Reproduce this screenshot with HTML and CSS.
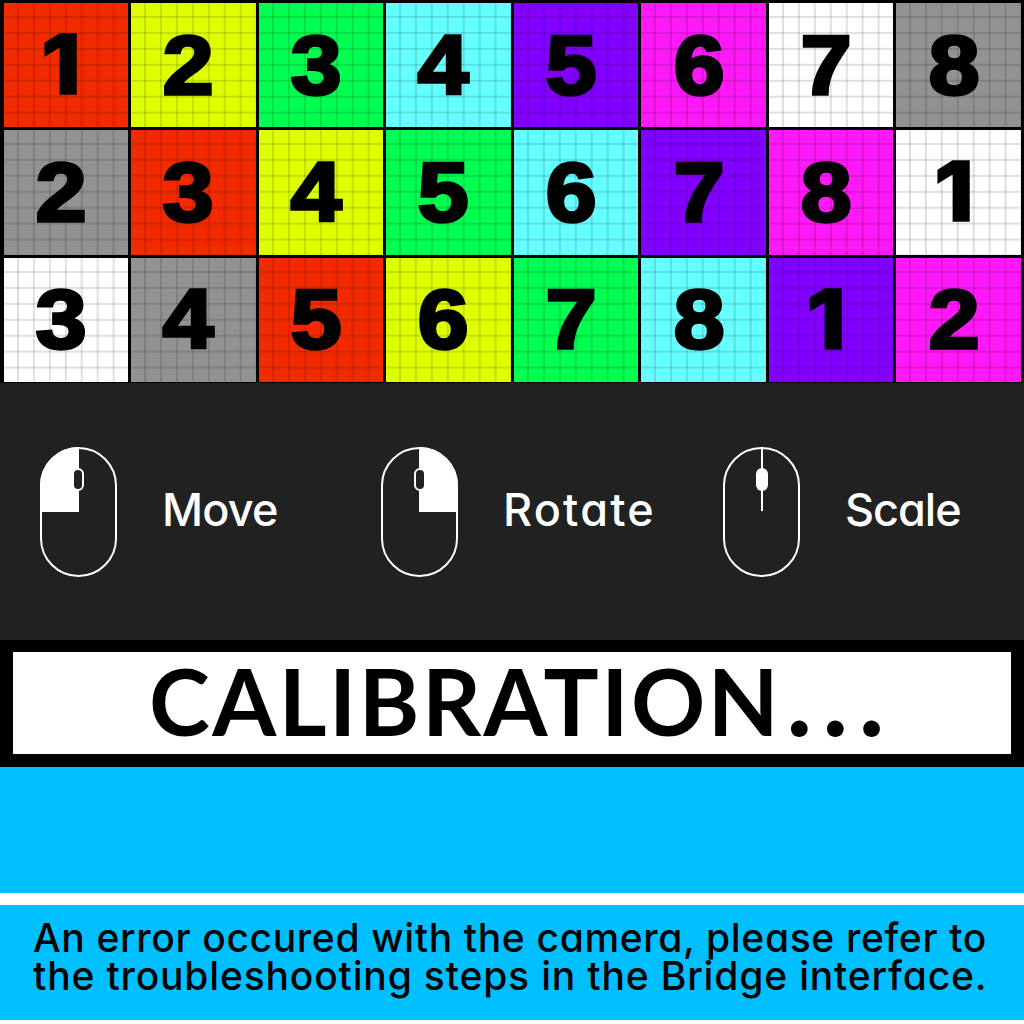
FILE: index.html
```
<!DOCTYPE html>
<html lang="en">
<head>
<meta charset="utf-8">
<title>Calibration</title>
<link rel="stylesheet" href="styles.css">
</head>
<body>
<main class="page">
  <section class="board">
    <div class="cell red"><span class="one">1</span></div><div class="cell yellow"><span>2</span></div><div class="cell green"><span>3</span></div><div class="cell cyan"><span>4</span></div><div class="cell purple"><span>5</span></div><div class="cell magenta"><span>6</span></div><div class="cell white"><span>7</span></div><div class="cell grey"><span>8</span></div>
    <div class="cell grey"><span>2</span></div><div class="cell red"><span>3</span></div><div class="cell yellow"><span>4</span></div><div class="cell green"><span>5</span></div><div class="cell cyan"><span>6</span></div><div class="cell purple"><span>7</span></div><div class="cell magenta"><span>8</span></div><div class="cell white"><span class="one">1</span></div>
    <div class="cell white"><span>3</span></div><div class="cell grey"><span>4</span></div><div class="cell red"><span>5</span></div><div class="cell yellow"><span>6</span></div><div class="cell green"><span>7</span></div><div class="cell cyan"><span>8</span></div><div class="cell purple"><span class="one">1</span></div><div class="cell magenta"><span>2</span></div>
  </section>

  <section class="controls">
    <div class="control">
      <svg class="mouse" viewBox="0 0 77 130">
        <path d="M39 0A38.5 38.5 0 0 0 0 38.5V65H39Z" fill="#fff"/>
        <rect x="1" y="1" width="75" height="128" rx="37.5" fill="none" stroke="#fff" stroke-width="2"/>
        <rect x="33" y="22" width="10" height="21" rx="5" fill="#212121" stroke="#fff" stroke-width="2"/>
      </svg>
      <span class="label move">Move</span>
    </div>
    <div class="control">
      <svg class="mouse" viewBox="0 0 77 130">
        <path d="M38 0A38.5 38.5 0 0 1 77 38.5V65H38Z" fill="#fff"/>
        <rect x="1" y="1" width="75" height="128" rx="37.5" fill="none" stroke="#fff" stroke-width="2"/>
        <rect x="34" y="22" width="10" height="21" rx="5" fill="#212121" stroke="#fff" stroke-width="2"/>
      </svg>
      <span class="label rotate">Rotate</span>
    </div>
    <div class="control">
      <svg class="mouse" viewBox="0 0 77 130">
        <rect x="1" y="1" width="75" height="128" rx="37.5" fill="none" stroke="#fff" stroke-width="2"/>
        <path d="M39 1V64" stroke="#fff" stroke-width="2"/>
        <rect x="33" y="21" width="12" height="23" rx="6" fill="#fff"/>
      </svg>
      <span class="label scale">Scale</span>
    </div>
  </section>

  <section class="status"><h1 class="title">CALIBRATION<span class="dots">...</span></h1></section>
  <section class="blank"></section>
  <section class="error">
    <p class="line first">An error occured with the camera, please refer to</p>
    <p class="line second">the troubleshooting steps in the Bridge interface.</p>
  </section>
</main>
</body>
</html>
```
FILE: styles.css
```
* { box-sizing: border-box; }
body { margin: 0; background: #fff; }
.page { width: 1024px; height: 1024px; overflow: hidden; display: flex; flex-direction: column; }

.board {
  height: 383px;
  flex: none;
  padding: 3px 3px 1px 3.5px;
  display: grid;
  grid-template-columns: repeat(8, 1fr);
  grid-template-rows: repeat(3, 1fr);
  gap: 3px;
  background: #000;
}
.cell {
  display: flex;
  align-items: center;
  justify-content: center;
  padding-right: 10px;
  background-image:
    linear-gradient(90deg, rgba(0,0,0,.12) 2px, transparent 2px),
    linear-gradient(rgba(0,0,0,.12) 2px, transparent 2px);
  background-size: 15.95px 100%, 100% 15.95px;
  background-position: 13px 0, 0 13px;
}
.cell span {
  font: bold 83px/1 "Liberation Sans", Arial, sans-serif;
  -webkit-text-stroke: 3.4px #000;
  transform: scaleX(1.1);
}
.cell .one {
  font: 800 82px/1 Inter, sans-serif;
  -webkit-text-stroke: 1.5px #000;
  transform: scaleX(1.1);
}
.red { background-color: #f22a00; }
.yellow { background-color: #dfff00; }
.green { background-color: #00ff50; }
.cyan { background-color: #66ffff; }
.purple { background-color: #8200ff; }
.magenta { background-color: #ff18f8; }
.white { background-color: #fff; }
.grey { background-color: #929292; }

.controls {
  height: 257px;
  flex: none;
  padding: 0 0 0 40px;
  display: grid;
  grid-template-columns: 341px 342px 1fr;
  align-items: center;
  background: #212121;
}
.control { display: flex; align-items: center; gap: 45px; }
.mouse { width: 77px; height: 130px; flex: none; display: block; }
.label {
  padding-bottom: 4px;
  font: 500 45px/56px Inter, sans-serif;
  font-feature-settings: "cv11";
  color: #fff;
  white-space: nowrap;
}
.move { letter-spacing: -0.8px; }
.rotate { letter-spacing: 2.2px; }
.scale { letter-spacing: -1px; }

.status {
  height: 127px;
  flex: none;
  border: solid #000;
  border-width: 12px 13px 13px;
  background: #fff;
  display: flex;
  align-items: center;
  padding: 0 0 5px 136px;
}
.title {
  margin: 0;
  font: 700 92px/98px Lato, sans-serif;
  letter-spacing: 2.5px;
  color: #000;
  white-space: nowrap;
}
.dots {
  margin-left: 5px;
  font-size: 110px;
  line-height: 0;
  letter-spacing: 10px;
}

.blank { height: 126px; flex: none; background: #00bfff; }
.error {
  height: 127px;
  flex: none;
  border-top: 12px solid #fff;
  padding: 14px 0 0 33px;
  background: #00bfff;
}
.line {
  margin: 0;
  font: 500 39px/38px Inter, sans-serif;
  font-feature-settings: "cv11";
  color: #000;
  white-space: nowrap;
}
.first { letter-spacing: 0.65px; }
.second { letter-spacing: 0.83px; }
```
